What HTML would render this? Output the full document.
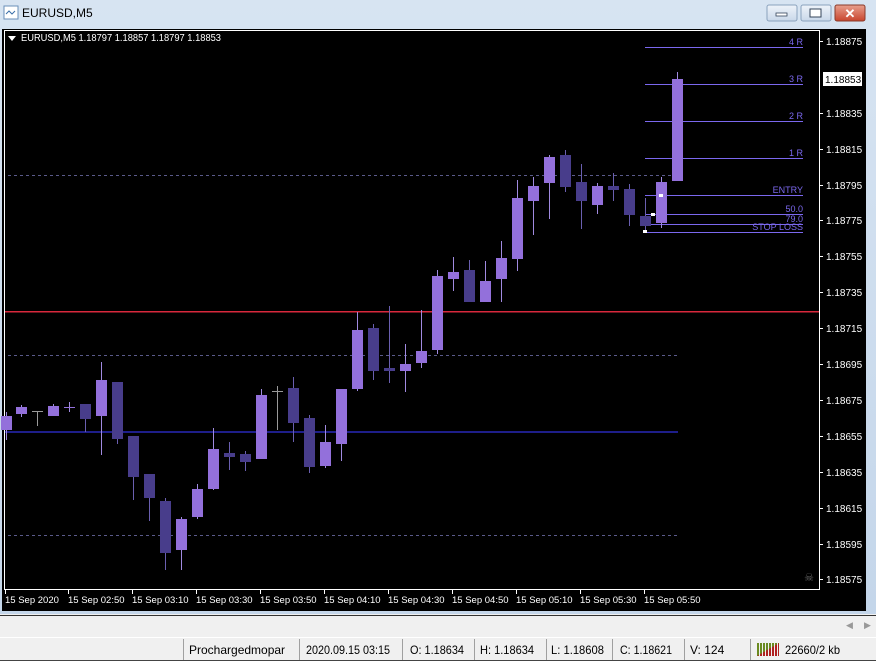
<!DOCTYPE html>
<html><head><meta charset="utf-8"><style>
body{margin:0;width:876px;height:661px;overflow:hidden;background:#f0f0f0;font-family:"Liberation Sans",sans-serif}
svg{display:block}
</style></head><body>
<svg width="876" height="661" xmlns="http://www.w3.org/2000/svg" font-family="Liberation Sans, sans-serif">
<defs><linearGradient id="tb" x1="0" y1="0" x2="0" y2="1"><stop offset="0" stop-color="#d7e4f2"/><stop offset="1" stop-color="#c4d6ea"/></linearGradient>
<linearGradient id="cl" x1="0" y1="0" x2="0" y2="1"><stop offset="0" stop-color="#e8a08e"/><stop offset="1" stop-color="#c8452e"/></linearGradient>
<linearGradient id="bt" x1="0" y1="0" x2="0" y2="1"><stop offset="0" stop-color="#eef3fa"/><stop offset="1" stop-color="#c9d8ea"/></linearGradient></defs>
<rect x="0" y="0" width="876" height="614" fill="url(#tb)"/>
<rect x="4" y="6" width="14" height="13" fill="#fff" stroke="#6a8fb8"/>
<path d="M6 14 l3 -3 l3 3 l3 -3" stroke="#3a6fa8" fill="none"/>
<text x="22" y="17" font-size="12" fill="#000">EURUSD,M5</text>
<rect x="767" y="5" width="30" height="16" rx="2" fill="url(#bt)" stroke="#8aa2bd"/>
<rect x="776" y="13" width="11" height="3" fill="#fff" stroke="#34445a" stroke-width="0.8"/>
<rect x="801" y="5" width="30" height="16" rx="2" fill="url(#bt)" stroke="#8aa2bd"/>
<rect x="810" y="9" width="11" height="8" fill="#fff" stroke="#34445a"/>
<rect x="835" y="5" width="30" height="16" rx="2" fill="url(#cl)" stroke="#8a3a2a"/>
<text x="850" y="18" font-size="13" font-weight="bold" fill="#fff" text-anchor="middle">✕</text>
<rect x="2" y="29" width="864" height="582" fill="#000"/>
<rect x="4.5" y="30.5" width="815" height="559" fill="none" stroke="#fff"/>
<g stroke-dasharray="3,3" stroke="#5a5a8a"><line x1="8" y1="175.5" x2="678" y2="175.5"/><line x1="8" y1="355.5" x2="678" y2="355.5"/><line x1="8" y1="535.5" x2="678" y2="535.5"/></g>
<rect x="5" y="311" width="814" height="1.5" fill="#d8283c"/>
<rect x="5" y="431" width="673" height="2" fill="#1e1e8a"/>
<g fill="#7b68ee"><rect x="645" y="47" width="158" height="1"/><rect x="645" y="84" width="158" height="1"/><rect x="645" y="121" width="158" height="1"/><rect x="645" y="158" width="158" height="1"/><rect x="645" y="195" width="158" height="1"/><rect x="645" y="214" width="158" height="1"/><rect x="645" y="224" width="158" height="1"/><rect x="645" y="232" width="158" height="1"/></g>
<g font-size="9" fill="#7b68ee" text-anchor="end"><text x="803" y="45">4  R</text><text x="803" y="82">3  R</text><text x="803" y="119">2  R</text><text x="803" y="156">1  R</text><text x="803" y="193">ENTRY</text><text x="803" y="212">50.0</text><text x="803" y="222">79.0</text><text x="803" y="230">STOP LOSS</text></g>
<g id="c"></g>
<g font-size="10" fill="#fff"><text x="21" y="41" textLength="200" lengthAdjust="spacingAndGlyphs">EURUSD,M5  1.18797 1.18857 1.18797 1.18853</text></g>
<path d="M8 36 h8 l-4 5z" fill="#fff"/>
<g font-size="10" fill="#fff">
<text x="826" y="45">1.18875</text><text x="826" y="117">1.18835</text><text x="826" y="153">1.18815</text><text x="826" y="189">1.18795</text><text x="826" y="224">1.18775</text><text x="826" y="260">1.18755</text><text x="826" y="296">1.18735</text><text x="826" y="332">1.18715</text><text x="826" y="368">1.18695</text><text x="826" y="404">1.18675</text><text x="826" y="440">1.18655</text><text x="826" y="476">1.18635</text><text x="826" y="512">1.18615</text><text x="826" y="548">1.18595</text><text x="826" y="583">1.18575</text></g>
<g stroke="#fff"><line x1="820" y1="41.5" x2="823" y2="41.5"/><line x1="820" y1="113.5" x2="823" y2="113.5"/><line x1="820" y1="149.5" x2="823" y2="149.5"/><line x1="820" y1="185.5" x2="823" y2="185.5"/><line x1="820" y1="220.5" x2="823" y2="220.5"/><line x1="820" y1="256.5" x2="823" y2="256.5"/><line x1="820" y1="292.5" x2="823" y2="292.5"/><line x1="820" y1="328.5" x2="823" y2="328.5"/><line x1="820" y1="364.5" x2="823" y2="364.5"/><line x1="820" y1="400.5" x2="823" y2="400.5"/><line x1="820" y1="436.5" x2="823" y2="436.5"/><line x1="820" y1="472.5" x2="823" y2="472.5"/><line x1="820" y1="508.5" x2="823" y2="508.5"/><line x1="820" y1="544.5" x2="823" y2="544.5"/><line x1="820" y1="579.5" x2="823" y2="579.5"/></g>
<rect x="823" y="72" width="39" height="14" fill="#fff"/><text x="825" y="83" font-size="10" fill="#000">1.18853</text>
<text x="809" y="581" font-size="11" fill="#666" text-anchor="middle">☠</text>
<g font-size="9.5" fill="#fff"><text x="5" y="603">15 Sep 2020</text><text x="68" y="603">15 Sep 02:50</text><text x="132" y="603">15 Sep 03:10</text><text x="196" y="603">15 Sep 03:30</text><text x="260" y="603">15 Sep 03:50</text><text x="324" y="603">15 Sep 04:10</text><text x="388" y="603">15 Sep 04:30</text><text x="452" y="603">15 Sep 04:50</text><text x="516" y="603">15 Sep 05:10</text><text x="580" y="603">15 Sep 05:30</text><text x="644" y="603">15 Sep 05:50</text></g>
<g stroke="#fff"><line x1="5.5" y1="590" x2="5.5" y2="594"/><line x1="68.5" y1="590" x2="68.5" y2="594"/><line x1="132.5" y1="590" x2="132.5" y2="594"/><line x1="196.5" y1="590" x2="196.5" y2="594"/><line x1="260.5" y1="590" x2="260.5" y2="594"/><line x1="324.5" y1="590" x2="324.5" y2="594"/><line x1="388.5" y1="590" x2="388.5" y2="594"/><line x1="452.5" y1="590" x2="452.5" y2="594"/><line x1="516.5" y1="590" x2="516.5" y2="594"/><line x1="580.5" y1="590" x2="580.5" y2="594"/><line x1="644.5" y1="590" x2="644.5" y2="594"/></g>
<rect x="0" y="614" width="876" height="47" fill="#f0f0f0"/>
<line x1="0" y1="615.5" x2="876" y2="615.5" stroke="#333"/>
<text x="846" y="628" font-size="9" fill="#999">◀</text><text x="864" y="628" font-size="9" fill="#999">▶</text>
<line x1="0" y1="637.5" x2="876" y2="637.5" stroke="#fff"/>
<line x1="0" y1="660.5" x2="876" y2="660.5" stroke="#444"/>
<g stroke="#a0a0a0"><line x1="183.5" y1="639" x2="183.5" y2="660"/><line x1="299.5" y1="639" x2="299.5" y2="660"/><line x1="402.5" y1="639" x2="402.5" y2="660"/><line x1="474.5" y1="639" x2="474.5" y2="660"/><line x1="546.5" y1="639" x2="546.5" y2="660"/><line x1="612.5" y1="639" x2="612.5" y2="660"/><line x1="684.5" y1="639" x2="684.5" y2="660"/><line x1="750.5" y1="639" x2="750.5" y2="660"/></g>
<g font-size="12" fill="#000"><text x="189" y="654">Prochargedmopar</text><text x="306" y="654" textLength="84" lengthAdjust="spacingAndGlyphs">2020.09.15 03:15</text><text x="410" y="654" textLength="54" lengthAdjust="spacingAndGlyphs">O: 1.18634</text><text x="480" y="654" textLength="54" lengthAdjust="spacingAndGlyphs">H: 1.18634</text><text x="551" y="654" textLength="53" lengthAdjust="spacingAndGlyphs">L: 1.18608</text><text x="620" y="654" textLength="52" lengthAdjust="spacingAndGlyphs">C: 1.18621</text><text x="690" y="654">V: 124</text><text x="785" y="654" textLength="55" lengthAdjust="spacingAndGlyphs">22660/2 kb</text></g>
<g><rect x="757" y="643" width="22" height="13" fill="#6a8a20"/><path d="M757 656 L779 643 L779 656Z" fill="#b02020"/><g stroke="#f0f0f0" stroke-width="1"><line x1="759.5" y1="643" x2="759.5" y2="656"/><line x1="762.5" y1="643" x2="762.5" y2="656"/><line x1="765.5" y1="643" x2="765.5" y2="656"/><line x1="768.5" y1="643" x2="768.5" y2="656"/><line x1="771.5" y1="643" x2="771.5" y2="656"/><line x1="774.5" y1="643" x2="774.5" y2="656"/><line x1="777.5" y1="643" x2="777.5" y2="656"/></g></g>
</svg>
<script>
var d=[[6,416,430,412,440,1],[21,407,414,405,417,1],[37,411,411,411,426,2],[53,406,416,404,416,1],[69,407,407,402,412,1],[85,404,419,404,432,0],[101,380,416,362,455,1],[117,382,439,382,444,0],[133,436,477,436,500,0],[149,474,498,474,521,0],[165,501,553,498,570,0],[181,519,550,517,570,1],[197,489,517,484,519,1],[213,449,489,428,490,1],[229,453,457,442,470,0],[245,454,462,451,471,0],[261,395,459,389,459,1],[277,391,391,386,430,2],[293,388,423,377,442,0],[309,418,467,415,473,0],[325,442,466,425,468,1],[341,389,444,389,461,1],[357,330,389,312,391,1],[373,328,371,324,380,0],[389,368,371,306,383,0],[405,364,371,344,392,1],[421,351,363,310,368,1],[437,276,350,270,354,1],[453,272,279,257,291,1],[469,270,302,260,302,0],[485,281,302,261,302,1],[501,258,279,241,302,1],[517,198,259,180,271,1],[533,186,201,177,235,1],[549,157,183,155,219,1],[565,155,187,150,192,0],[581,182,201,164,229,0],[597,186,205,183,214,1],[613,186,190,173,201,0],[629,189,215,184,226,0],[645,216,226,198,231,0],[661,182,223,177,228,1],[677,79,181,72,181,1]];
var s='';
d.forEach(function(c){var col=c[5]==1?'#9370db':c[5]==0?'#483d8b':'#9a9a9a';var wc=c[5]==0?'#6a5fb0':'#a08ae0';if(c[5]==2)wc='#9a9a9a';
s+='<line x1="'+(c[0]+.5)+'" y1="'+c[3]+'" x2="'+(c[0]+.5)+'" y2="'+c[4]+'" stroke="'+wc+'"/>';
if(c[2]-c[1]<2)s+='<line x1="'+(c[0]-5)+'" y1="'+(c[1]+.5)+'" x2="'+(c[0]+6)+'" y2="'+(c[1]+.5)+'" stroke="'+(c[5]==2?'#9a9a9a':col)+'"/>';
else s+='<rect x="'+(c[0]-5)+'" y="'+c[1]+'" width="11" height="'+(c[2]-c[1])+'" fill="'+col+'"/>';});
s+='<rect x="659" y="194" width="4" height="3" fill="#fff"/><rect x="651" y="213" width="4" height="3" fill="#fff"/><rect x="643" y="230" width="4" height="3" fill="#fff"/>';
document.getElementById('c').innerHTML=s;
</script>
</body></html>
